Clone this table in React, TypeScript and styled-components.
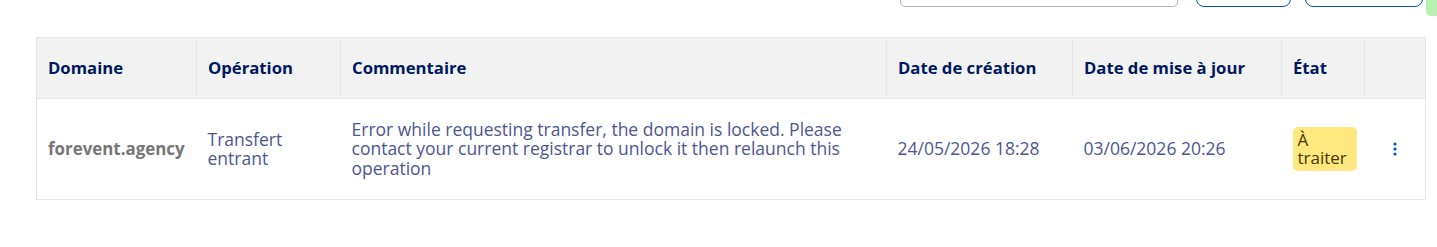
import { FC } from 'react';
import styled, { createGlobalStyle } from 'styled-components';

const GlobalStyle = createGlobalStyle`
	html, body {
		margin: 0;
		padding: 0;
		background: #ffffff;
	}
	body {
		font-family: 'Open Sans', 'Noto Sans', sans-serif;
		overflow: hidden;
	}
`;

type Operation = {
	domain: string;
	operation: string;
	comment: string;
	created: string;
	updated: string;
	state: string;
};

const rows: Operation[] = [
	{
		domain: 'forevent.agency',
		operation: 'Transfert entrant',
		comment:
			'Error while requesting transfer, the domain is locked. Please contact your current registrar to unlock it then relaunch this operation',
		created: '24/05/2026 18:28',
		updated: '03/06/2026 20:26',
		state: 'À traiter',
	},
];

const columns = [
	{ label: 'Domaine', width: 160 },
	{ label: 'Opération', width: 144 },
	{ label: 'Commentaire', width: 546 },
	{ label: 'Date de création', width: 186 },
	{ label: 'Date de mise à jour', width: 209 },
	{ label: 'État', width: 83 },
	{ label: '', width: 61 },
];

const App: FC = () => {
	return (
		<Root>
			<GlobalStyle />
			<Toolbar>
				<SearchInput />
				<OutlineButton $width={95} />
				<OutlineButton $width={118} />
			</Toolbar>
			<FeedbackTab />
			<Table>
				<colgroup>
					{columns.map((col, i) => (
						<col key={i} style={{ width: col.width }} />
					))}
				</colgroup>
				<thead>
					<tr>
						{columns.map((col, i) => (
							<HeadCell key={i}>{col.label}</HeadCell>
						))}
					</tr>
				</thead>
				<tbody>
					{rows.map((row) => (
						<tr key={row.domain}>
							<DomainCell>{row.domain}</DomainCell>
							<Cell>{row.operation}</Cell>
							<Cell>{row.comment}</Cell>
							<Cell>{row.created}</Cell>
							<Cell>{row.updated}</Cell>
							<Cell>
								<Badge>{row.state}</Badge>
							</Cell>
							<Cell>
								<MenuButton aria-label='Actions'>
									<svg width='4' height='14' viewBox='0 0 4 14'>
										<circle cx='2' cy='2' r='1.6' fill='#0050d7' />
										<circle cx='2' cy='7' r='1.6' fill='#0050d7' />
										<circle cx='2' cy='12' r='1.6' fill='#0050d7' />
									</svg>
								</MenuButton>
							</Cell>
						</tr>
					))}
				</tbody>
			</Table>
		</Root>
	);
};

const Root = styled.div`
	position: relative;
	width: 1437px;
	height: 247px;
	padding-left: 36px;
	box-sizing: border-box;
`;

const Toolbar = styled.div`
	display: flex;
	justify-content: flex-end;
	align-items: flex-end;
	height: 7px;
	overflow: hidden;
	width: 1387px;
	margin-bottom: 30px;
`;

const SearchInput = styled.div`
	width: 278px;
	height: 40px;
	flex: none;
	box-sizing: border-box;
	border: 1px solid #b3b3b3;
	border-radius: 5px;
	margin-right: 18px;
`;

const OutlineButton = styled.div<{ $width: number }>`
	width: ${(p) => p.$width}px;
	height: 40px;
	flex: none;
	box-sizing: border-box;
	border: 1px solid #0050d7;
	border-radius: 8px;

	& + & {
		margin-left: 14px;
	}
`;

const FeedbackTab = styled.div`
	position: absolute;
	top: 0;
	right: 0;
	width: 11px;
	height: 16px;
	background: #b6f2b0;
	border-bottom-left-radius: 5px;
`;

const Table = styled.table`
	width: 1389px;
	border-collapse: collapse;
	table-layout: fixed;
	border: 1px solid #e6e6e6;
`;

const HeadCell = styled.th`
	height: 61px;
	box-sizing: border-box;
	padding: 0 11px 2px;
	background: #f2f2f2;
	border: 1px solid #e6e6e6;
	text-align: left;
	vertical-align: middle;
	font-size: 16.7px;
	font-weight: 700;
	color: #00185e;
	white-space: nowrap;
`;

const Cell = styled.td`
	height: 101px;
	box-sizing: border-box;
	padding: 0 11px;
	border-top: 1px solid #e6e6e6;
	vertical-align: middle;
	font-size: 17.5px;
	line-height: 19.5px;
	color: #4d5693;
`;

const DomainCell = styled(Cell)`
	font-size: 16.9px;
	font-weight: 700;
	color: #767676;
`;

const Badge = styled.span`
	display: inline-block;
	width: 64px;
	box-sizing: border-box;
	padding: 4px 6px 5px 5px;
	border-radius: 5px;
	background: #ffe880;
	color: #4a3500;
	font-size: 17px;
	line-height: 17.5px;
`;

const MenuButton = styled.button`
	display: flex;
	align-items: center;
	justify-content: center;
	margin-left: 16px;
	padding: 0;
	width: 6px;
	height: 20px;
	background: none;
	border: none;
	cursor: pointer;
`;

export default App;
